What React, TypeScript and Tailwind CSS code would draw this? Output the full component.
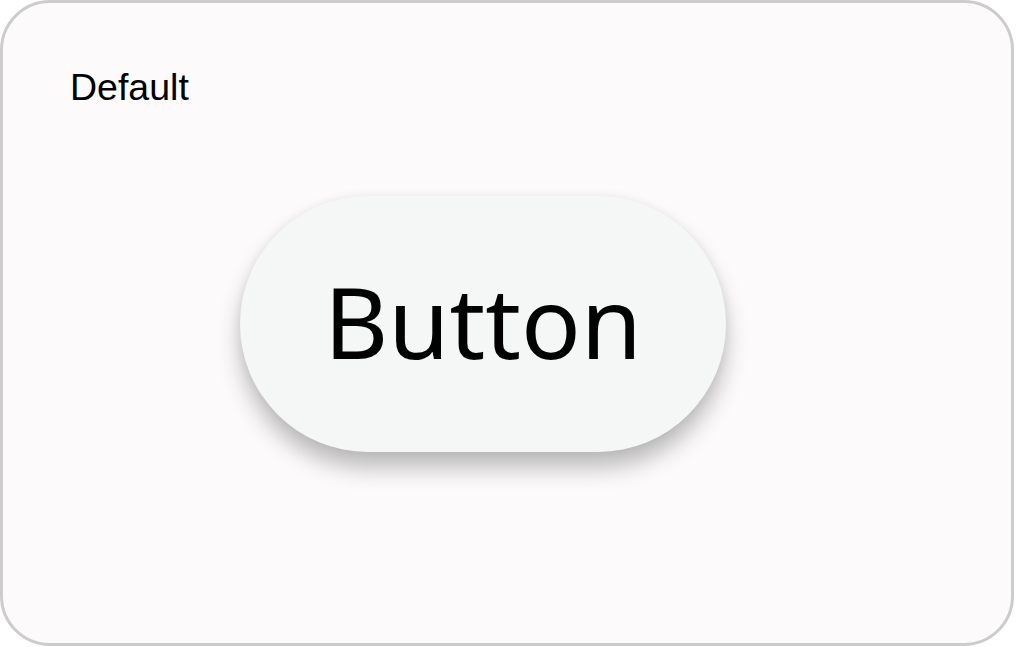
import React from "react";

export default function App() {
  return (
    <div className="w-[1016px] h-[647px] bg-white">
      <div className="w-[1014px] h-[646px] rounded-[50px] border-[3px] border-[#cccccc] bg-[#fcfafb] flex flex-col pl-[67px] pt-[66px]">
        <span className="text-[37.5px] leading-none text-black font-['Liberation_Sans',Arial,sans-serif]">
          Default
        </span>
        <button className="mt-[89px] ml-[170px] w-[486px] h-[256px] rounded-full bg-[#f5f6f6] flex items-center justify-center shadow-[0_16px_22px_rgba(0,0,0,0.25),0_0_10px_rgba(0,0,0,0.06)]">
          <span className="text-[99px] leading-none text-black font-['Noto_Sans',sans-serif] -mt-[6px]">
            Button
          </span>
        </button>
      </div>
    </div>
  );
}
